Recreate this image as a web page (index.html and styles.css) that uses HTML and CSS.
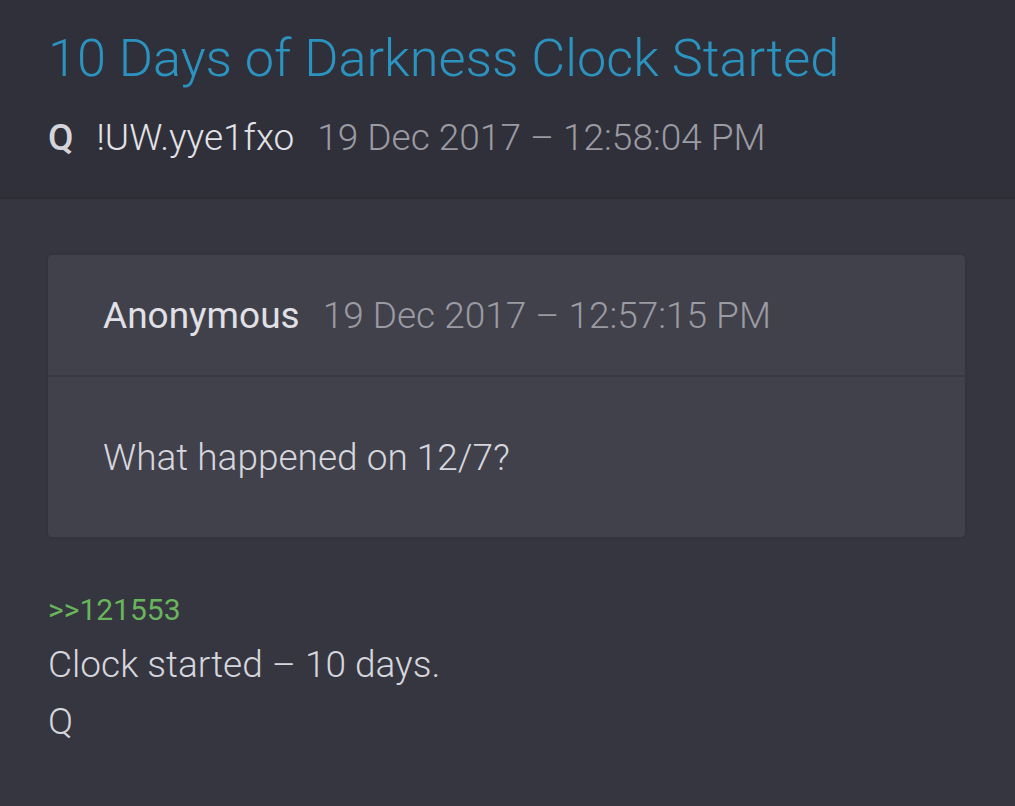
FILE: index.html
```html
<!DOCTYPE html>
<html lang="en">
<head>
    <meta charset="UTF-8">
    <meta name="viewport" content="width=device-width, initial-scale=1.0">
    <title>10 Days of Darkness Clock Started</title>
    <link rel="stylesheet" href="styles.css">
</head>
<body>
    <div class="post-header">
        <h1 class="post-title">10 Days of Darkness Clock Started</h1>
        <div class="post-meta">
            <span class="author">Q</span>
            <span class="trip">!UW.yye1fxo</span>
            <span class="date">19 Dec 2017 – 12:58:04 PM</span>
        </div>
    </div>
    <div class="post-body">
        <div class="quote">
            <div class="quote-meta">
                <span class="quote-author">Anonymous</span>
                <span class="date">19 Dec 2017 – 12:57:15 PM</span>
            </div>
            <div class="quote-text">What happened on 12/7?</div>
        </div>
        <div class="reply-link">&gt;&gt;121553</div>
        <div class="post-text first">Clock started – 10 days.</div>
        <div class="post-text">Q</div>
    </div>
</body>
</html>
```

FILE: styles.css
```css
body {
    margin: 0;
    font-family: Roboto, "Noto Sans", sans-serif;
    font-weight: 300;
    background-color: #363640;
    color: #d6d6de;
    height: 806px;
    overflow: hidden;
}

.post-header {
    background-color: #30303a;
    height: 199px;
    padding: 0 48px;
    border-bottom: 2px solid #2c2c35;
    box-sizing: border-box;
}

.post-title {
    margin: 0;
    padding-top: 28px;
    font-size: 52.3px;
    font-weight: 300;
    line-height: 60px;
    color: #2b93c0;
    white-space: nowrap;
}

.post-meta {
    margin-top: 28px;
    font-size: 37px;
    line-height: 44px;
    display: flex;
    gap: 23px;
    align-items: baseline;
}

.author {
    font-weight: 500;
    color: #d4d4da;
}

.trip {
    color: #e2e2e8;
}

.date {
    color: #9b9ba3;
}

.post-body {
    padding: 56px 50px 0 48px;
}

.quote {
    background-color: #41414b;
    border-radius: 4px;
    box-shadow: 0 0 3px rgba(0, 0, 0, 0.15);
}

.quote-meta {
    height: 122px;
    padding: 0 55px;
    display: flex;
    align-items: center;
    gap: 23px;
    font-size: 37px;
    border-bottom: 2px solid #393942;
    box-sizing: border-box;
}

.quote-author {
    font-weight: 400;
    color: #e0e0e6;
}

.quote-text {
    height: 160px;
    padding: 0 55px;
    display: flex;
    align-items: center;
    font-size: 37px;
    color: #d6d6de;
}

.reply-link {
    margin-top: 53px;
    font-size: 30px;
    font-weight: 400;
    color: #68b55c;
    line-height: 40px;
}

.post-text {
    font-size: 37px;
    line-height: 57px;
    color: #d6d6de;
}

.post-text.first {
    margin-top: 6px;
}
```
